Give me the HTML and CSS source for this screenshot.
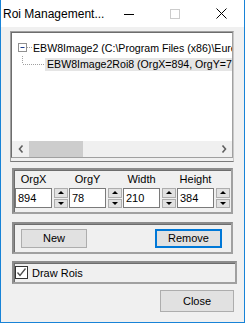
FILE: index.html
```html
<!DOCTYPE html>
<html lang="en">
<head>
  <meta charset="UTF-8">
  <title>Roi Management</title>
  <link rel="stylesheet" href="styles.css">
</head>
<body>

<div class="window">

  <!-- title bar -->
  <div class="titlebar">
    <span class="title">Roi Management...</span>
    <div class="controls">
      <span class="ctl">
        <svg width="10" height="10" viewBox="0 0 10 10"><path d="M0 5.5H10" stroke="#000" stroke-width="1"/></svg>
      </span>
      <span class="ctl">
        <svg width="10" height="10" viewBox="0 0 10 10"><rect x="0.5" y="0.5" width="9" height="9" fill="none" stroke="#cccccc"/></svg>
      </span>
      <span class="ctl">
        <svg width="11" height="11" viewBox="0 0 11 11"><path d="M0.5 0.5L10.5 10.5M10.5 0.5L0.5 10.5" stroke="#000" stroke-width="1"/></svg>
      </span>
    </div>
  </div>

  <div class="client">

    <!-- roi tree -->
    <div class="tree-group">
      <div class="tree-view">
        <div class="nodes">
          <div class="node">
            <svg class="branch" width="21" height="16" viewBox="0 0 21 16">
              <rect x="6.5" y="3.5" width="8" height="8" fill="#fff" stroke="#919191"/>
              <path d="M8.5 7.5H12.5" stroke="#1c3c8c"/>
              <path d="M15 7.5H20" stroke="#a0a0a0" stroke-dasharray="1 1"/>
            </svg>
            <span class="label">EBW8Image2 (C:\Program Files (x86)\Euresys\Open eVision\Images\Sample.bmp)</span>
          </div>
          <div class="node">
            <svg class="branch" width="33" height="16" viewBox="0 0 33 16">
              <path d="M10.5 0V8" stroke="#a0a0a0" stroke-dasharray="1 1"/>
              <path d="M11 8.5H32" stroke="#a0a0a0" stroke-dasharray="1 1"/>
            </svg>
            <span class="label selected">EBW8Image2Roi8 (OrgX=894, OrgY=78, Width=210, Height=384)</span>
          </div>
        </div>
        <div class="hscroll">
          <span class="arrow">
            <svg width="6" height="8" viewBox="0 0 6 8"><path d="M4.5 0.5L1.5 4L4.5 7.5" fill="none" stroke="#606060" stroke-width="1.6"/></svg>
          </span>
          <span class="thumb"></span>
          <span class="track"></span>
          <span class="arrow">
            <svg width="6" height="8" viewBox="0 0 6 8"><path d="M1.5 0.5L4.5 4L1.5 7.5" fill="none" stroke="#606060" stroke-width="1.6"/></svg>
          </span>
        </div>
      </div>
    </div>

    <!-- origin and size -->
    <div class="group fields">
      <div class="field">
        <span class="field-name">OrgX</span>
        <div class="field-row">
          <input class="num" type="text" value="894">
          <div class="spin"><span class="up"></span><span class="down"></span></div>
        </div>
      </div>
      <div class="field">
        <span class="field-name">OrgY</span>
        <div class="field-row">
          <input class="num" type="text" value="78">
          <div class="spin"><span class="up"></span><span class="down"></span></div>
        </div>
      </div>
      <div class="field">
        <span class="field-name">Width</span>
        <div class="field-row">
          <input class="num" type="text" value="210">
          <div class="spin"><span class="up"></span><span class="down"></span></div>
        </div>
      </div>
      <div class="field">
        <span class="field-name">Height</span>
        <div class="field-row">
          <input class="num" type="text" value="384">
          <div class="spin"><span class="up"></span><span class="down"></span></div>
        </div>
      </div>
    </div>

    <!-- new / remove -->
    <div class="group actions">
      <button class="btn btn-new">New</button>
      <button class="btn btn-remove">Remove</button>
    </div>

    <!-- draw rois -->
    <div class="group draw">
      <span class="check">
        <svg width="11" height="11" viewBox="0 0 11 11"><path d="M1.5 5.5L4 8.5L9.5 1.5" fill="none" stroke="#4d4d4d" stroke-width="1.3"/></svg>
      </span>
      <span class="check-label">Draw Rois</span>
    </div>

    <button class="btn btn-close">Close</button>

  </div>
</div>

</body>
</html>
```

FILE: styles.css
```css
* {
  margin: 0;
  padding: 0;
  box-sizing: border-box;
}

body {
  font-family: "Liberation Sans", Arial, sans-serif;
  font-size: 11px;
  color: #000;
  background: #fff;
}

.window {
  width: 245px;
  height: 323px;
  display: flex;
  flex-direction: column;
  background: #f0f0f0;
  border: 1px solid #1883d7;
  border-top: none;
}

/* title bar */

.titlebar {
  height: 27px;
  display: flex;
  align-items: center;
  background: #fff;
}

.title {
  flex: 1;
  padding-left: 2px;
  font-size: 12px;
}

.controls {
  display: flex;
}

.ctl {
  width: 46px;
  height: 27px;
  display: flex;
  align-items: center;
  justify-content: center;
}

/* client area */

.client {
  flex: 1;
  display: flex;
  flex-direction: column;
  align-items: flex-start;
}

.tree-group {
  width: 224px;
  height: 131px;
  margin: 4px 0 0 9px;
  border: 1px solid #a0a0a0;
  border-right-color: #c8c8c8;
  border-bottom-color: #7a7a7a;
}

.tree-view {
  height: 126px;
  display: flex;
  flex-direction: column;
  background: #fff;
  border: 1px solid #6d6d6d;
  border-right-color: #a0a0a0;
  border-bottom-color: #a0a0a0;
}

.nodes {
  flex: 1;
  padding-top: 7px;
  overflow: hidden;
}

.node {
  height: 16px;
  display: flex;
  align-items: center;
  white-space: nowrap;
}

.branch {
  flex: none;
}

.label {
  font-size: 10.6px;
  line-height: 13px;
}

.label.selected {
  background: #e5e5e5;
  padding: 0 2px;
}

.hscroll {
  height: 16px;
  display: flex;
  background: #f0f0f0;
}

.hscroll .arrow {
  width: 17px;
  display: flex;
  align-items: center;
  justify-content: center;
}

.hscroll .thumb {
  width: 54px;
  background: #cdcdcd;
}

.hscroll .track {
  flex: 1;
}

/* grouped panels */

.group {
  border: 2px solid #a0a0a0;
  border-top-color: #8c8c8c;
  border-left-color: #8c8c8c;
  box-shadow: inset 1px 1px 0 #6d6d6d;
}

.fields {
  width: 221px;
  height: 46px;
  margin: 6px 0 0 11px;
  padding: 2px 0 0 1px;
  display: grid;
  grid-template-columns: repeat(4, 53px);
  column-gap: 1px;
}

.field {
  display: flex;
  flex-direction: column;
}

.field-name {
  width: 37px;
  text-align: center;
  line-height: 14px;
  margin-bottom: 2px;
}

.field-row {
  display: flex;
  gap: 2px;
}

.num {
  width: 37px;
  height: 20px;
  padding-left: 2px;
  border: 1px solid #7a7a7a;
  background: #fff;
  font-family: inherit;
  font-size: 11px;
  outline: none;
}

.spin {
  width: 14px;
  height: 20px;
  display: flex;
  flex-direction: column;
  gap: 1px;
}

.spin span {
  flex: 1;
  position: relative;
  background: #e1e1e1;
  border: 1px solid #adadad;
}

.spin span::after {
  content: "";
  position: absolute;
  left: 3px;
  top: 2px;
  border-left: 3px solid transparent;
  border-right: 3px solid transparent;
}

.spin .up::after {
  border-bottom: 3px solid #000;
}

.spin .down::after {
  border-top: 3px solid #000;
}

.actions {
  width: 221px;
  height: 32px;
  margin: 8px 0 0 11px;
  padding: 0 9px 0 7px;
  display: flex;
  align-items: center;
  justify-content: space-between;
}

.btn {
  height: 19px;
  background: #e1e1e1;
  border: 1px solid #adadad;
  font-family: inherit;
  font-size: 11px;
  color: #000;
}

.btn-new {
  width: 66px;
}

.btn-remove {
  width: 67px;
  border: 2px solid #0078d7;
}

.draw {
  width: 225px;
  height: 23px;
  margin: 7px 0 0 11px;
  padding-left: 1px;
  display: flex;
  align-items: center;
  gap: 4px;
}

.check {
  width: 13px;
  height: 13px;
  display: flex;
  align-items: center;
  justify-content: center;
  background: #fff;
  border: 1px solid #333;
}

.btn-close {
  width: 74px;
  height: 22px;
  margin: 6px 0 0 159px;
}
```
